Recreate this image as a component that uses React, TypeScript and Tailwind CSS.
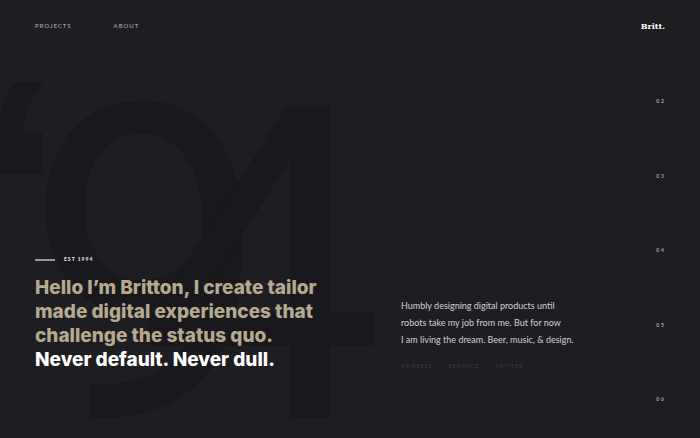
const sections = ["02", "03", "04", "05", "06"];
const socials = ["DRIBBBLE", "BEHANCE", "TWITTER"];

function Backdrop() {
  return (
    <div
      aria-hidden="true"
      className="pointer-events-none absolute inset-0 overflow-hidden font-['Roboto',sans-serif] leading-none text-[#19191d] select-none"
    >
      <span className="absolute -left-6 top-8 font-['Liberation_Sans',sans-serif] text-[320px] font-bold">‘</span>
      <span className="absolute left-6 top-12 text-[440px]">9</span>
      <span className="absolute left-[136px] top-12 text-[440px]">4</span>
    </div>
  );
}

function Header() {
  return (
    <header className="flex h-[52px] items-center justify-between px-[35px]">
      <nav aria-label="Main" className="flex gap-[42px] text-[6px] leading-none tracking-[1px] text-[#b4b4b8]">
        <a href="#projects">PROJECTS</a>
        <a href="#about">ABOUT</a>
      </nav>
      <a
        href="#top"
        className="font-['DejaVu_Serif',serif] text-[8px] leading-none font-black text-white"
      >
        Britt.
      </a>
    </header>
  );
}

export default function App() {
  return (
    <div
      id="top"
      className="relative flex min-h-screen flex-col overflow-hidden bg-[#1e1e22] font-['Lato',sans-serif]"
    >
      <Backdrop />
      <div className="relative flex flex-1 flex-col">
        <Header />
        <div className="flex flex-1 justify-between pr-[34px] pl-[35px]">
          <main className="flex flex-1 items-end pb-[66px]">
            <section className="w-[366px] shrink-0">
              <p className="flex items-center gap-[9px] text-[5px] leading-none font-black tracking-[1px] text-[#e4e4e6]">
                <span className="h-[2px] w-5 bg-[#99999d]" />
                EST 1994
              </p>
              <h1 className="mt-[14px] font-['Inter',sans-serif] text-[19px] leading-6 font-extrabold text-[#b5a98f]">
                Hello I’m Britton, I create tailor
                <br />
                made digital experiences that
                <br />
                challenge the status quo.
                <br />
                <span className="text-white">Never default. Never dull.</span>
              </h1>
            </section>
            <section>
              <p className="text-[9px] leading-[17px] whitespace-nowrap text-[#d0d0d2]">
                Humbly designing digital products until
                <br />
                robots take my job from me. But for now
                <br />
                I am living the dream. Beer, music, &amp; design.
              </p>
              <nav aria-label="Social" className="mt-4 mb-[3px] flex gap-4 text-[5px] leading-none tracking-[1px] text-[#3c3c40]">
                {socials.map((name) => (
                  <a key={name} href={"#" + name.toLowerCase()}>
                    {name}
                  </a>
                ))}
              </nav>
            </section>
          </main>
          <nav
            aria-label="Sections"
            className="flex flex-col justify-between pt-[47px] pb-9 text-[5px] leading-none font-bold tracking-[2px] text-[#a5a5a9]"
          >
            {sections.map((n) => (
              <a key={n} href={"#section-" + n}>
                {n}
              </a>
            ))}
          </nav>
        </div>
      </div>
    </div>
  );
}
